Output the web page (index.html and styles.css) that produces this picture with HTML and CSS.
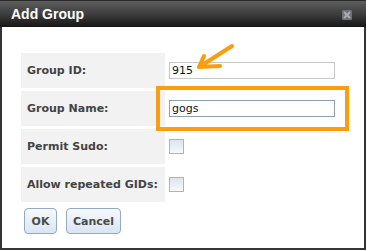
FILE: index.html
```html
<!DOCTYPE html>
<html lang="en">
  <head>
    <meta charset="UTF-8" />
    <meta name="viewport" content="width=device-width, initial-scale=1.0" />
    <link rel="stylesheet" href="styles.css">
    <title>Add Group</title>
  </head>
  <body>
    <div class="dialog">
      <div class="dialog__bar">
        <h1 class="dialog__title">Add Group</h1>
        <span class="dialog__close">
          <svg width="10" height="10" viewBox="0 0 10 10">
            <rect x="0" y="0" width="10" height="10" rx="1" fill="#6f7275" />
            <path d="M2 2 L8 8 M8 2 L2 8" stroke="#a9adb2" stroke-width="2" />
          </svg>
        </span>
      </div>
      <div class="dialog__body">
        <table class="form">
          <tr class="form__tr">
            <td class="form__label">Group ID:</td>
            <td class="form__value">
              <input class="form__input" type="text" value="915" />
            </td>
          </tr>
          <tr class="form__tr">
            <td class="form__label">Group Name:</td>
            <td class="form__value">
              <input class="form__input form__input_focus" type="text" value="gogs" />
            </td>
          </tr>
          <tr class="form__tr">
            <td class="form__label">Permit Sudo:</td>
            <td class="form__value">
              <input class="form__check" type="checkbox" />
            </td>
          </tr>
          <tr class="form__tr">
            <td class="form__label">Allow repeated GIDs:</td>
            <td class="form__value">
              <input class="form__check" type="checkbox" />
            </td>
          </tr>
        </table>
        <div class="buttons">
          <button class="button">OK</button>
          <button class="button">Cancel</button>
        </div>
      </div>
      <!-- annotation drawn over the dialog -->
      <svg class="markup" width="367" height="251" viewBox="0 0 367 251">
        <rect x="158" y="88" width="189" height="41" fill="none" stroke="#fb9d0c" stroke-width="4" />
        <path d="M232 46 L199 67 M199 67 L204 56 M199 67 L220 66" fill="none" stroke="#fb9d0c" stroke-width="4" stroke-linecap="round" />
      </svg>
    </div>
  </body>
</html>
```

FILE: styles.css
```css
*,
*::after,
*::before {
  box-sizing: border-box;
  margin: 0;
  padding: 0;
}

body {
  background: #ffffff;
  font-family: "DejaVu Sans", Verdana, sans-serif;
}

.dialog {
  position: relative;
  width: 366px;
  height: 250px;
  background: #ffffff;
  border: 2px solid #353535;
  border-top: 0;
}

.dialog__bar {
  display: flex;
  justify-content: space-between;
  align-items: center;
  height: 27px;
  margin: 0 -2px;
  padding: 0 14px 0 11px;
  background: linear-gradient(#5d5d5d, #3a3a3a 55%, #161616);
  border-top: 1px solid #2a2a2a;
}

.dialog__title {
  color: #ffffff;
  font-family: "Liberation Sans", Arial, sans-serif;
  font-size: 14px;
  font-weight: 700;
}

.dialog__close {
  display: flex;
  margin-top: 1px;
}

.dialog__body {
  padding: 23px 0 0 16px;
}

.form {
  border-spacing: 3px;
}

.form__tr {
  height: 35px;
}

.form__label {
  width: 144px;
  padding-left: 6px;
  background: #f2f2f2;
  color: #444444;
  font-size: 11px;
  font-weight: 700;
  vertical-align: middle;
}

.form__value {
  width: 172px;
  padding-left: 1px;
  vertical-align: middle;
}

.form__input {
  display: block;
  width: 166px;
  height: 17px;
  padding: 0 2px;
  border: 1px solid #c8c8c8;
  font-family: "DejaVu Sans", Verdana, sans-serif;
  font-size: 11px;
  color: #111111;
  outline: none;
}

.form__input_focus {
  border-color: #8da0b3;
}

.form__check {
  display: block;
  appearance: none;
  width: 15px;
  height: 15px;
  border: 1px solid #b3b3b3;
  background: linear-gradient(#dce4ee, #f7f9fb);
}

.buttons {
  display: flex;
  gap: 9px;
  padding: 3px 0 0 6px;
}

.button {
  min-width: 33px;
  height: 26px;
  padding: 0 6px;
  border: 1px solid #93a9c4;
  border-radius: 4px;
  background: linear-gradient(#f7f9fc, #d9e5f3);
  color: #4a4a4a;
  font-family: "DejaVu Sans", Verdana, sans-serif;
  font-size: 11px;
  font-weight: 700;
}

.markup {
  position: absolute;
  top: 0;
  left: -2px;
  pointer-events: none;
}
```
